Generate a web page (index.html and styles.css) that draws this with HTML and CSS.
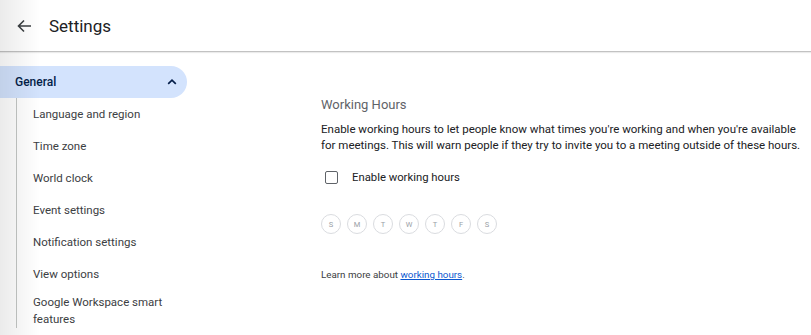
FILE: index.html
```html
<!DOCTYPE html>
<html lang="en">
<head>
    <meta charset="UTF-8">
    <meta name="viewport" content="width=device-width, initial-scale=1.0">
    <title>Settings</title>
    <link rel="stylesheet" href="styles.css">
</head>
<body>
    <div class="edge-shade"></div>

    <header class="topbar">
        <button class="back-btn" aria-label="Back">
            <svg width="16" height="16" viewBox="0 0 16 16">
                <path d="M15 8H2.5M8 2.5L2.5 8L8 13.5" fill="none" stroke="#3c4043" stroke-width="1.6"/>
            </svg>
        </button>
        <h1 class="title">Settings</h1>
    </header>

    <div class="page">
        <nav class="sidebar">
            <div class="group-head">
                <span>General</span>
                <svg width="10" height="8" viewBox="0 0 10 8">
                    <path d="M1.2 5.8L5 2.2L8.8 5.8" fill="none" stroke="#041e49" stroke-width="1.7"/>
                </svg>
            </div>
            <ul class="sub-list">
                <li>Language and region</li>
                <li>Time zone</li>
                <li>World clock</li>
                <li>Event settings</li>
                <li>Notification settings</li>
                <li>View options</li>
                <li class="two-line">Google Workspace smart features</li>
            </ul>
        </nav>

        <main class="content">
            <h2 class="section-title">Working Hours</h2>
            <p class="desc">Enable working hours to let people know what times you're working and when you're available for meetings. This will warn people if they try to invite you to a meeting outside of these hours.</p>

            <label class="check-row">
                <span class="box"></span>
                <span>Enable working hours</span>
            </label>

            <div class="days">
                <span class="day">S</span>
                <span class="day">M</span>
                <span class="day">T</span>
                <span class="day">W</span>
                <span class="day">T</span>
                <span class="day">F</span>
                <span class="day">S</span>
            </div>

            <p class="learn">Learn more about <a href="#">working hours</a>.</p>
        </main>
    </div>
</body>
</html>
```

FILE: styles.css
```css
body {
    margin: 0;
    font-family: Roboto, 'Liberation Sans', sans-serif;
    color: #3c4043;
    background-color: #FFFFFF;
    overflow: hidden;
}

.edge-shade {
    position: fixed;
    top: 0;
    left: 0;
    bottom: 0;
    width: 40px;
    background: linear-gradient(to right, rgba(0, 0, 0, 0.08), rgba(0, 0, 0, 0));
    pointer-events: none;
    z-index: 5;
}

.topbar {
    height: 51px;
    display: flex;
    align-items: center;
    border-bottom: 1px solid #c2c2c2;
    box-shadow: 0 1px 1px rgba(0, 0, 0, 0.08);
}

.back-btn {
    border: none;
    background: none;
    padding: 0;
    margin-left: 16px;
    width: 16px;
    height: 16px;
    display: flex;
}

.title {
    margin: 0 0 0 17px;
    font-size: 17px;
    font-weight: 400;
    color: #202124;
}

.page {
    display: flex;
}

.sidebar {
    width: 187px;
    padding-top: 14px;
    flex-shrink: 0;
}

.group-head {
    height: 32px;
    display: flex;
    align-items: center;
    justify-content: space-between;
    padding: 0 10px 0 15px;
    background-color: #d3e3fd;
    border-radius: 0 16px 16px 0;
    font-size: 12px;
    font-weight: 500;
    color: #041e49;
}

.sub-list {
    list-style: none;
    margin: 0 0 0 16px;
    padding: 0;
    border-left: 1px solid #c4c7c5;
}

.sub-list li {
    height: 32px;
    display: flex;
    align-items: center;
    padding-left: 16px;
    font-size: 11.5px;
    color: #3c4043;
}

.sub-list li.two-line {
    height: auto;
    padding-top: 4px;
    line-height: 17px;
    width: 140px;
}

.content {
    margin-left: 134px;
    padding-top: 45px;
}

.section-title {
    margin: 0 0 9px;
    font-size: 13px;
    font-weight: 400;
    color: #5f6368;
}

.desc {
    margin: 0;
    width: 482px;
    font-size: 11.5px;
    line-height: 16px;
    color: #202124;
}

.check-row {
    display: flex;
    align-items: center;
    margin-top: 18px;
    font-size: 11.3px;
    color: #202124;
}

.box {
    width: 11px;
    height: 11px;
    border: 1.5px solid #5f6368;
    border-radius: 2px;
    margin: 0 14px 0 4px;
}

.days {
    display: flex;
    gap: 6px;
    margin-top: 30px;
}

.day {
    width: 18px;
    height: 18px;
    border: 1px solid #dadce0;
    border-radius: 50%;
    display: flex;
    align-items: center;
    justify-content: center;
    font-size: 7.5px;
    color: #9aa0a6;
}

.learn {
    margin: 35px 0 0;
    font-size: 9.8px;
    color: #3c4043;
}

.learn a {
    color: #0b57d0;
}
```
